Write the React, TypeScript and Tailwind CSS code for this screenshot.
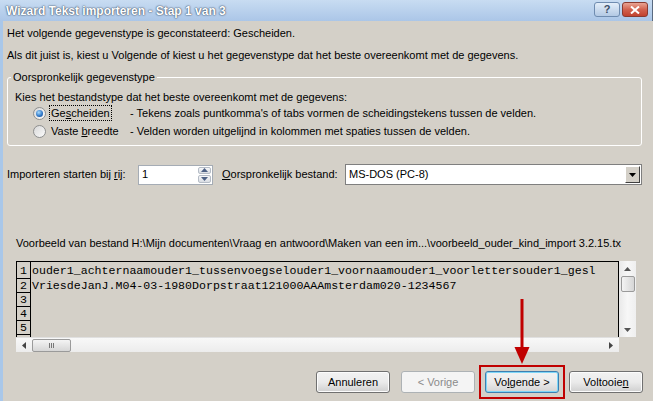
import clsx from 'clsx';

type BtnProps = {
  children: React.ReactNode;
  disabled?: boolean;
  primary?: boolean;
};

const Btn = ({ children, disabled, primary }: BtnProps) => (
  <div
    className={clsx(
      'w-[74px] h-[22px] rounded-[3px] border flex items-center justify-center leading-none',
      disabled && 'border-[#adb2b5] bg-[#f4f4f4] text-[#8b8b8b]',
      primary &&
        'border-[#3c7fb1] bg-linear-to-b from-[#f2f2f2] via-[#ebebeb] to-[#d4d4d4] shadow-[inset_0_0_0_1px_#7fd6f7]',
      !disabled && !primary && 'border-[#707070] bg-linear-to-b from-[#f2f2f2] via-[#ebebeb] to-[#cfcfcf] shadow-[inset_0_0_0_1px_#fcfcfc]'
    )}
  >
    {children}
  </div>
);

const Radio = ({ checked }: { checked?: boolean }) => (
  <span className="w-[13px] h-[13px] shrink-0 rounded-full border border-[#8e8f8f] bg-linear-to-br from-[#d8d8d8] to-[#fbfbfb] flex items-center justify-center">
    {checked && (
      <span className="w-[7px] h-[7px] rounded-full bg-[radial-gradient(circle_at_40%_35%,#a8dcff,#2a72c4_60%,#0e3f80)]" />
    )}
  </span>
);

const Tri = ({ dir, color = '#000' }: { dir: 'up' | 'down' | 'left' | 'right'; color?: string }) => {
  const d = {
    up: 'M0 4 L3.5 0 L7 4 Z',
    down: 'M0 0 L7 0 L3.5 4 Z',
    left: 'M4 0 L4 7 L0 3.5 Z',
    right: 'M0 0 L4 3.5 L0 7 Z',
  }[dir];
  const horiz = dir === 'up' || dir === 'down';
  return (
    <svg width={horiz ? 7 : 4} height={horiz ? 4 : 7} viewBox={horiz ? '0 0 7 4' : '0 0 4 7'}>
      <path d={d} fill={color} />
    </svg>
  );
};

const TitleBar = () => (
  <div className="h-[21px] shrink-0 flex items-center bg-linear-to-b from-[#c8dcf2] to-[#abc6e7] border-r border-[#5a6a80]">
    <span className="ml-[6px] font-bold text-[12px] text-white [text-shadow:0_0_2px_#3a4a60,0_0_1px_#3a4a60]">
      Wizard Tekst importeren - Stap 1 van 3
    </span>
    <div className="ml-auto mr-[4px] flex gap-[2px] mt-[-2px]">
      <div className="w-[26px] h-[15px] rounded-[3px] border border-[#6f8cb0] bg-linear-to-b from-[#e4eef9] to-[#b3c9e4] flex items-center justify-center text-[11px] font-bold text-[#3c4e66] leading-none">
        ?
      </div>
      <div className="w-[26px] h-[15px] rounded-[3px] border border-[#8a3a30] bg-linear-to-b from-[#e8a393] via-[#d2624f] to-[#c2422f] flex items-center justify-center">
        <svg width="10" height="8" viewBox="0 0 10 8">
          <path d="M1 0.5 L9 7.5 M9 0.5 L1 7.5" stroke="#fff" strokeWidth="2" />
        </svg>
      </div>
    </div>
  </div>
);

const rows = [
  'ouder1_achternaamouder1_tussenvoegselouder1_voornaamouder1_voorlettersouder1_gesl',
  'VriesdeJanJ.M04-03-1980Dorpstraat121000AAAmsterdam020-1234567',
  '',
  '',
  '',
  '',
];

const Preview = () => (
  <div className="ml-[9px] mt-[11px] w-[620px] h-[91px] flex flex-col">
    <div className="flex h-[76px]">
      <div className="w-[603px] border-t border-l border-r border-black overflow-hidden font-['Liberation_Mono','Courier_New',monospace] text-[11.6px]">
        {rows.map((r, i) => (
          <div key={i} className={clsx('flex', i === 0 ? 'h-[17px] leading-[18px]' : 'h-[14px] leading-[14px]')}>
            <div className="w-[14px] shrink-0 border-r border-b border-black text-center">{i < 5 ? i + 1 : ''}</div>
            <div className="pl-[1px] whitespace-pre">{r}</div>
          </div>
        ))}
      </div>
      <div className="w-[17px] flex flex-col items-center bg-linear-to-r from-[#e9e9e9] via-[#f7f7f7] to-[#efefef]">
        <div className="h-[15px] flex items-center justify-center">
          <Tri dir="up" color="#555" />
        </div>
        <div className="w-[14px] h-[16px] rounded-[2px] border border-[#9a9a9a] bg-linear-to-r from-[#f4f4f4] to-[#d6d6d6]" />
        <div className="mt-auto h-[14px] flex items-center justify-center">
          <Tri dir="down" color="#555" />
        </div>
      </div>
    </div>
    <div className="flex h-[15px]">
      <div className="w-[603px] flex items-center bg-linear-to-b from-[#f8f8f8] to-[#ececec] border-t border-[#e0e0e0]">
        <div className="w-[16px] flex justify-center">
          <Tri dir="left" color="#444" />
        </div>
        <div className="w-[39px] h-[13px] rounded-[2px] border border-[#9a9a9a] bg-linear-to-b from-[#f4f4f4] to-[#d6d6d6] flex items-center justify-center gap-[1px]">
          <span className="w-[1px] h-[5px] bg-[#777]" />
          <span className="w-[1px] h-[5px] bg-[#777]" />
          <span className="w-[1px] h-[5px] bg-[#777]" />
        </div>
        <div className="ml-auto w-[16px] flex justify-center">
          <Tri dir="right" color="#444" />
        </div>
      </div>
      <div className="w-[17px]" />
    </div>
  </div>
);

export default function App() {
  return (
    <div className="relative w-[653px] h-[401px] overflow-hidden bg-[#d4d0c8] font-['Liberation_Sans',Arial,sans-serif] text-[11px] text-black flex flex-col">
      <TitleBar />
      <div className="flex-1 border-l-[3px] border-[#a9c7e9] pl-[4px] flex flex-col">
        <p className="mt-[6px] leading-[13px]">Het volgende gegevenstype is geconstateerd: Gescheiden.</p>
        <p className="mt-[9px] leading-[13px]">
          Als dit juist is, kiest u Volgende of kiest u het gegevenstype dat het beste overeenkomt met de gegevens.
        </p>

        <fieldset className="mt-[9px] w-[635px] border border-white rounded-[3px] pb-[5px]">
          <legend className="ml-[3px] px-[2px] leading-[13px]">Oorspronkelijk gegevenstype</legend>
          <p className="pl-[7px] pt-[7px] leading-[13px]">Kies het bestandstype dat het beste overeenkomt met de gegevens:</p>
          <div className="flex items-center h-[18px]">
            <span className="ml-[25px]">
              <Radio checked />
            </span>
            <span className="ml-[3px] w-[81px] shrink-0">
              <span className="inline-block border border-dotted border-black px-[1px] leading-[14px]">
                Ge<span className="underline">s</span>cheiden
              </span>
            </span>
            <span>- Tekens zoals puntkomma's of tabs vormen de scheidingstekens tussen de velden.</span>
          </div>
          <div className="flex items-center h-[18px]">
            <span className="ml-[25px]">
              <Radio />
            </span>
            <span className="ml-[3px] w-[81px] shrink-0 pl-[2px]">
              Vaste <span className="underline">b</span>reedte
            </span>
            <span>- Velden worden uitgelijnd in kolommen met spaties tussen de velden.</span>
          </div>
        </fieldset>

        <div className="mt-[18px] h-[21px] flex items-center">
          <span className="w-[131px] shrink-0">
            Importeren starten bij <span className="underline">r</span>ij:
          </span>
          <div className="w-[75px] h-[20px] border border-[#a5acb5] bg-white flex items-center">
            <span className="pl-[3px] flex-1">1</span>
            <div className="w-[15px] h-full flex flex-col gap-[1px] p-[1px]">
              {(['up', 'down'] as const).map((d) => (
                <div
                  key={d}
                  className="flex-1 rounded-[2px] border border-[#b5bcc6] bg-linear-to-b from-[#f6f7f9] to-[#d9dde3] flex items-center justify-center"
                >
                  <Tri dir={d} color="#4d6185" />
                </div>
              ))}
            </div>
          </div>
          <span className="ml-[9px] w-[123px] shrink-0">
            <span className="underline">O</span>orspronkelijk bestand:
          </span>
          <div className="w-[297px] h-[21px] border border-[#7f7f7f] bg-white flex items-center">
            <span className="pl-[3px] flex-1">MS-DOS (PC-8)</span>
            <div className="w-[15px] h-[17px] mr-[1px] bg-[#d4d0c8] border border-t-white border-l-white border-r-[#404040] border-b-[#404040] flex items-center justify-center">
              <Tri dir="down" />
            </div>
          </div>
        </div>

        <p className="mt-[52px] ml-[9px] leading-[13px] whitespace-nowrap">
          Voorbeeld van bestand H:\Mijn documenten\Vraag en antwoord\Maken van een im...\voorbeeld_ouder_kind_import 3.2.15.tx
        </p>

        <Preview />

        <div className="mt-[13px] flex items-center justify-end pr-[10px]">
          <Btn>Annuleren</Btn>
          <div className="ml-[11px]">
            <Btn disabled>&lt; Vorige</Btn>
          </div>
          <div className="mx-[4px] border-2 border-[#c00000] p-[4px]">
            <Btn primary>
              Vo<span className="underline">l</span>gende &gt;
            </Btn>
          </div>
          <Btn>
            Voltooie<span className="underline">n</span>
          </Btn>
        </div>
      </div>

      <svg className="absolute left-[513px] top-[299px]" width="18" height="66" viewBox="0 0 18 66">
        <path d="M9 0 V50" stroke="#c00000" strokeWidth="3" />
        <path d="M1.5 48 L16.5 48 L9 65 Z" fill="#c00000" />
      </svg>
    </div>
  );
}
